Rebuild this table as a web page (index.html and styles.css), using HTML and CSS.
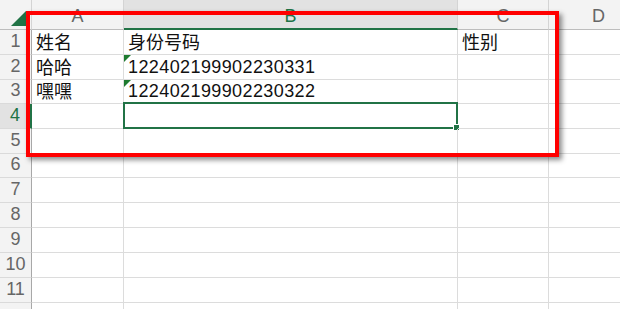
FILE: index.html
```html
<!DOCTYPE html>
<html lang="zh">
<head>
<meta charset="utf-8">
<link rel="stylesheet" href="styles.css">
</head>
<body>
<div class="sheet">
  <div class="corner"><span class="corner-tri"></span></div>
  <div class="ch">A</div>
  <div class="ch ch-sel">B</div>
  <div class="ch">C</div>
  <div class="ch">D</div>

  <div class="rh">1</div>
  <div class="cell">姓名</div>
  <div class="cell">身份号码</div>
  <div class="cell">性别</div>
  <div class="cell"></div>

  <div class="rh">2</div>
  <div class="cell">哈哈</div>
  <div class="cell num"><span class="flag"></span>122402199902230331</div>
  <div class="cell"></div>
  <div class="cell"></div>

  <div class="rh">3</div>
  <div class="cell">嘿嘿</div>
  <div class="cell num"><span class="flag"></span>122402199902230322</div>
  <div class="cell"></div>
  <div class="cell"></div>

  <div class="rh rh-sel">4</div>
  <div class="cell"></div>
  <div class="cell active"><span class="sel"><span class="handle"></span></span></div>
  <div class="cell"></div>
  <div class="cell"></div>

  <div class="rh">5</div><div class="cell"></div><div class="cell"></div><div class="cell"></div><div class="cell"></div>
  <div class="rh">6</div><div class="cell"></div><div class="cell"></div><div class="cell"></div><div class="cell"></div>
  <div class="rh">7</div><div class="cell"></div><div class="cell"></div><div class="cell"></div><div class="cell"></div>
  <div class="rh">8</div><div class="cell"></div><div class="cell"></div><div class="cell"></div><div class="cell"></div>
  <div class="rh">9</div><div class="cell"></div><div class="cell"></div><div class="cell"></div><div class="cell"></div>
  <div class="rh">10</div><div class="cell"></div><div class="cell"></div><div class="cell"></div><div class="cell"></div>
  <div class="rh">11</div><div class="cell"></div><div class="cell"></div><div class="cell"></div><div class="cell"></div>
  <div class="rh"></div><div class="cell"></div><div class="cell"></div><div class="cell"></div><div class="cell"></div>

  <div class="highlight"></div>
</div>
</body>
</html>
```

FILE: styles.css
```css
html, body {
  margin: 0;
  padding: 0;
  background: #ffffff;
  overflow: hidden;
}

.sheet {
  position: relative;
  display: grid;
  grid-template-columns: 32px 92px 334px 91px 100px;
  grid-template-rows: 30px 25px 25px 24px 25px 25px 24px 25px 25px 25px 25px 25px 25px;
  width: 620px;
  height: 309px;
  overflow: hidden;
  font-family: "Liberation Sans", "Noto Sans CJK SC", sans-serif;
}

.corner {
  position: relative;
  background: #f3f3f3;
  border-right: 1px solid #d4d4d4;
  border-bottom: 1px solid #bdbdbd;
}

.corner-tri {
  position: absolute;
  right: 5px;
  bottom: 3px;
  width: 0;
  height: 0;
  border-left: 15px solid transparent;
  border-bottom: 15px solid #217346;
}

.ch {
  box-sizing: border-box;
  background: #f3f3f3;
  border-right: 1px solid #d4d4d4;
  border-bottom: 1px solid #bdbdbd;
  color: #666666;
  font-size: 18px;
  display: flex;
  align-items: flex-end;
  justify-content: center;
  padding-bottom: 2px;
}

.ch-sel {
  background: #e2e2e2;
  color: #217346;
  border-bottom: 2px solid #217346;
  padding-bottom: 1px;
}

.rh {
  box-sizing: border-box;
  background: #f3f3f3;
  border-right: 1px solid #a8a8a8;
  border-bottom: 1px solid #dadada;
  color: #666666;
  font-size: 18px;
  display: flex;
  align-items: flex-end;
  justify-content: center;
  padding-bottom: 2px;
}

.rh-sel {
  background: #e2e2e2;
  color: #217346;
  border-right: 2px solid #217346;
}

.cell {
  position: relative;
  box-sizing: border-box;
  border-right: 1px solid #dcdcdc;
  border-bottom: 1px solid #dcdcdc;
  padding: 0 0 2px 4px;
  font-family: "Noto Sans CJK SC", sans-serif;
  font-size: 18px;
  line-height: 21px;
  color: #111111;
  display: flex;
  align-items: flex-end;
  white-space: nowrap;
}

.num {
  font-family: "Liberation Sans", sans-serif;
  font-size: 18px;
  letter-spacing: 0.4px;
  padding-bottom: 1px;
}

.flag {
  position: absolute;
  top: 0;
  left: 0;
  width: 0;
  height: 0;
  border-top: 7px solid #1e7b30;
  border-right: 7px solid transparent;
}

.sel {
  position: absolute;
  top: -2px;
  left: -1px;
  right: -1px;
  bottom: -1px;
  border: 2px solid #217346;
}

.handle {
  position: absolute;
  right: -4px;
  bottom: -4px;
  width: 5px;
  height: 5px;
  background: #217346;
  border: 1px solid #ffffff;
}

.highlight {
  position: absolute;
  left: 26px;
  top: 11px;
  width: 525px;
  height: 138px;
  border: 4px solid #ff0000;
  box-shadow: 3px 3px 5px rgba(0, 0, 0, 0.45);
  pointer-events: none;
}
```
